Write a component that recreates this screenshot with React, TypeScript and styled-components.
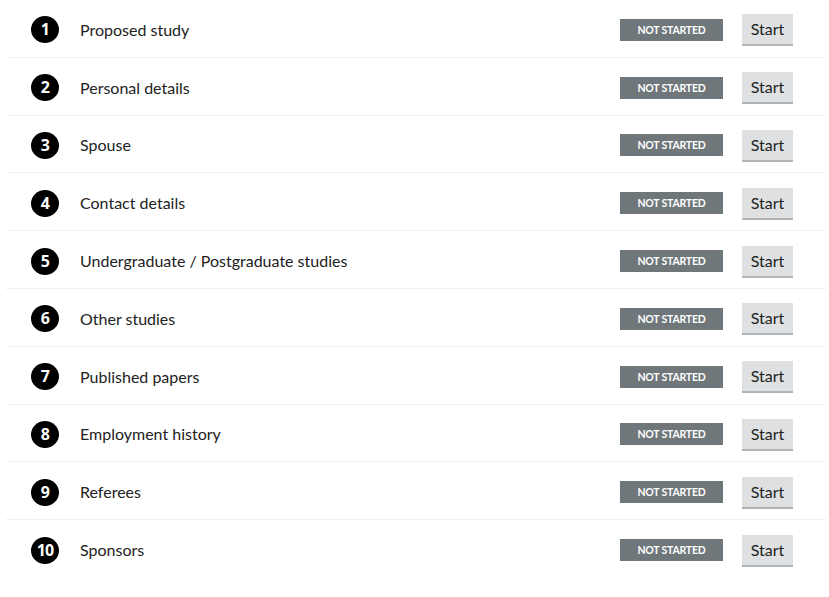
import React from "react";
import styled, { createGlobalStyle } from "styled-components";

const Global = createGlobalStyle`
  html, body { margin: 0; padding: 0; background: #ffffff; }
  body { font-family: Lato, "Noto Sans", sans-serif; color: #1d1f20; }
`;

const List = styled.ol`
  list-style: none;
  margin: 0;
  padding: 0 3px 0 6px;
`;

const Row = styled.li<{ $last?: boolean }>`
  box-sizing: border-box;
  height: 57.8px;
  display: flex;
  align-items: center;
  padding: 3px 33px 0 25px;
  border-bottom: 1px solid ${(p) => (p.$last ? "transparent" : "#f1f1f1")};
`;

const Num = styled.span`
  flex: none;
  width: 28px;
  height: 27px;
  border-radius: 50%;
  background: #000;
  color: #fff;
  display: flex;
  align-items: center;
  justify-content: center;
  font-family: "Noto Sans", sans-serif;
  font-weight: 700;
  font-size: 16px;
  letter-spacing: -0.8px;
  padding-bottom: 1px;
  box-sizing: border-box;
`;

const Label = styled.span`
  flex: 1;
  margin-left: 21px;
  font-size: 16px;
  color: #222;
  margin-top: -1px;
`;

const Tag = styled.span`
  flex: none;
  width: 103px;
  height: 22px;
  background: #6f777b;
  color: #fff;
  display: flex;
  align-items: center;
  justify-content: center;
  font-family: Lato, sans-serif;
  font-weight: 700;
  font-size: 10.5px;
  letter-spacing: -0.2px;
  text-transform: uppercase;
`;

const Button = styled.button`
  flex: none;
  margin-left: 19px;
  width: 51px;
  height: 30px;
  border: 0;
  background: #dee0e2;
  box-shadow: 0 2px 0 #b1b4b6;
  color: #1d1f20;
  font-family: Lato, "Noto Sans", sans-serif;
  font-size: 16px;
  padding: 0 0 1px;
  margin-top: -1px;
`;

const items = [
  "Proposed study",
  "Personal details",
  "Spouse",
  "Contact details",
  "Undergraduate / Postgraduate studies",
  "Other studies",
  "Published papers",
  "Employment history",
  "Referees",
  "Sponsors",
];

export default function App() {
  return (
    <>
      <Global />
      <List>
        {items.map((label, i) => (
          <Row key={label} $last={i === items.length - 1}>
            <Num>{i + 1}</Num>
            <Label>{label}</Label>
            <Tag>Not started</Tag>
            <Button>Start</Button>
          </Row>
        ))}
      </List>
    </>
  );
}
